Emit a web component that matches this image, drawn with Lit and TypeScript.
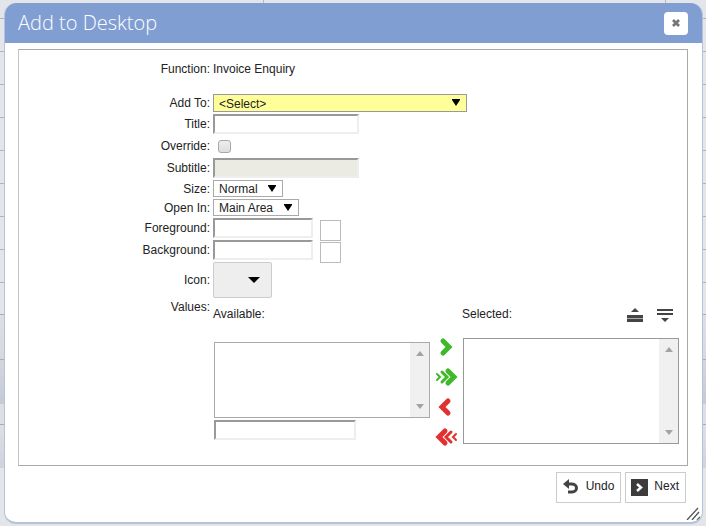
import { LitElement, html, css, svg } from "lit";
import { customElement } from "lit/decorators.js";

const chevron = (x: number, h: number, w: number, dir: number) => svg`
  <path d="M${x} ${10 - h} L${x + dir * h} 10 L${x} ${10 + h}" stroke-width=${w}></path>`;

@customElement("app-root")
export class AppRoot extends LitElement {
  static styles = css`
    :host {
      display: block;
      box-sizing: border-box;
      min-height: 100vh;
      padding: 3px 3px 3px 4px;
      background:
        linear-gradient(#b9bbc3, #b9bbc3) 263px 0 / 1px 3px no-repeat,
        linear-gradient(#b9bbc3, #b9bbc3) 665px 0 / 1px 3px no-repeat,
        linear-gradient(
          #a9acb6 0 1px, #dcdfe6 1px, #d6d9e0 45px, #a9acb6 45px 46px, #d3d6de 46px, #c6cad4 90px,
          #dcdfe6 90px 110px, #a9acb6 110px 111px, #dcdfe6 111px, #d0d3db 154px, #e4e5e9 154px
        ) 0 314px / 100% 100vh no-repeat,
        repeating-linear-gradient(#e3e5ea 0 18px, #b0b3bc 18px 19px, #e3e5ea 19px 33px);
      font: 12px/18px "Liberation Sans", Arial, sans-serif;
      color: #222;
    }
    * { box-sizing: border-box; }
    .dialog {
      display: flex;
      flex-direction: column;
      background: #fff;
      border-radius: 12px;
      border: 1px solid #b4c3da;
      border-top: 0;
      border-bottom-width: 2px;
      min-height: calc(100vh - 5px);
      position: relative;
      overflow: hidden;
    }
    .header {
      display: flex;
      align-items: center;
      justify-content: space-between;
      height: 40px;
      padding: 0 14px 0 13px;
      background: #819ed3;
    }
    .title {
      margin: 0;
      font: 300 20px/40px "Open Sans", "Noto Sans", sans-serif;
      color: #fff;
    }
    button {
      font: inherit;
      color: inherit;
      padding: 0;
      border: 0;
      background: none;
      display: flex;
      align-items: center;
      justify-content: center;
    }
    .close {
      width: 24px;
      height: 23px;
      border-radius: 4px;
      background: #fff;
    }
    .panel {
      flex: 1;
      margin: 6px 14px 0 13px;
      border: 1px solid #aaa;
      border-left-color: #c4c4c4;
      padding: 10px 8px 16px 0;
      display: flex;
      flex-direction: column;
      gap: 2px;
    }
    .row {
      display: grid;
      grid-template-columns: 191px minmax(0, 1fr);
      column-gap: 3px;
      align-items: center;
    }
    .row > :first-child { text-align: right; }
    .function { margin-bottom: 14px; }
    .short { line-height: 16px; }
    .tall { min-height: 20px; }
    input[type="text"] {
      display: block;
      width: 146px;
      height: 20px;
      margin: 0;
      padding: 1px 4px;
      font: inherit;
      border: 2px solid #eee;
      border-top-color: #999;
      border-left-color: #999;
      background: #fff;
    }
    input[type="text"].colour { width: 100px; }
    input[type="text"].filter { width: 142px; }
    input[type="text"]:disabled { background: #ebebe4; }
    input[type="checkbox"] {
      appearance: none;
      display: block;
      width: 13px;
      height: 13px;
      margin: 0 0 0 5px;
      border: 1px solid #a8a8a8;
      border-radius: 3px;
      background: linear-gradient(#eee, #ddd);
    }
    .drop { position: relative; display: block; width: 254px; height: 18px; }
    .drop select {
      appearance: none;
      display: block;
      width: 100%;
      height: 100%;
      margin: 0;
      padding: 0 5px;
      font: inherit;
      color: #222;
      border: 1px solid #aaa;
      border-radius: 0;
      background: #fff;
    }
    .drop.required select { background: #ffff99; border-color: #999; }
    .drop.size { width: 70px; height: 17px; }
    .drop.open { width: 86px; height: 17px; }
    .caret { position: absolute; right: 7px; top: 5px; pointer-events: none; }
    .pair { display: flex; gap: 7px; height: 20px; }
    .swatch {
      width: 21px;
      height: 21px;
      margin-top: 2px;
      border: 1px solid #bbb;
      background: #fff;
    }
    .icon {
      width: 59px;
      height: 36px;
      padding-left: 23px;
      border: 1px solid #ccc;
      border-radius: 2px;
      background: #eee;
    }
    .values { align-items: start; }
    .values > :first-child { line-height: 14px; }
    .picker {
      display: grid;
      grid-template-columns: 217px 33px 216px;
      padding-top: 5px;
    }
    .heads { height: 33px; display: flex; }
    .heads label { flex: 1; }
    .selected .heads { padding-right: 5px; gap: 12px; align-items: flex-start; }
    .selected .heads label { margin-left: -1px; }
    .order { width: 18px; height: 20px; }
    .available { padding-left: 1px; }
    .available .heads { margin: 0 0 4px -1px; }
    .list {
      display: flex;
      height: 106px;
      border: 1px solid #999;
    }
    .available .list { height: 76px; margin-bottom: 2px; border-color: #aaa; }
    .list select {
      appearance: none;
      flex: 1;
      min-width: 0;
      height: 100%;
      border: 0;
      margin: 0;
      padding: 0;
      background: #fff;
      font: inherit;
      overflow: hidden;
    }
    .scroll {
      width: 19px;
      padding: 8px 0;
      background: #f0f0f0;
      display: flex;
      flex-direction: column;
      align-items: center;
      justify-content: space-between;
    }
    .moves {
      display: flex;
      flex-direction: column;
      gap: 10px;
      padding: 32px 0 0 5px;
    }
    .move { width: 24px; height: 20px; }
    .move path { fill: none; stroke: currentColor; stroke-linecap: round; }
    .add { color: #3fb929; }
    .remove { color: #e23030; }
    .footer {
      display: flex;
      justify-content: flex-end;
      gap: 4px;
      padding: 6px 16px 19px;
    }
    .action {
      height: 31px;
      padding: 0 6px 3px 5px;
      gap: 6px;
      border: 1px solid #ccc;
      background: #fff;
    }
    .action svg { margin-top: 2px; }
    .grip { position: absolute; right: 2px; bottom: 2px; }
    svg { display: block; }
  `;

  private caret() {
    return html`<svg class="caret" width="8" height="7" viewBox="0 0 8 7"><path d="M0 0H8V1L4 7L0 1Z" fill="#000"></path></svg>`;
  }

  private scrollbar() {
    return html`<div class="scroll">
      <svg width="8" height="5"><path d="M0 5L4 0L8 5Z" fill="#a3a3a3"></path></svg>
      <svg width="8" height="5"><path d="M0 0H8L4 5Z" fill="#a3a3a3"></path></svg>
    </div>`;
  }

  private colourRow(name: string, id: string) {
    return html`<div class="row">
      <label for=${id}>${name}:</label>
      <div class="pair">
        <input class="colour" type="text" id=${id} />
        <button class="swatch" type="button" aria-label="${name} colour"></button>
      </div>
    </div>`;
  }

  render() {
    return html`
      <section class="dialog" role="dialog" aria-labelledby="heading">
        <header class="header">
          <h1 class="title" id="heading">Add to Desktop</h1>
          <button class="close" aria-label="Close">
            <svg width="8" height="8" viewBox="0 0 8 8"><path d="M1 1L7 7M7 1L1 7" stroke="#777" stroke-width="2.8"></path></svg>
          </button>
        </header>
        <form class="panel" @submit=${(e: Event) => e.preventDefault()}>
          <div class="row function"><span>Function:</span><span>Invoice Enquiry</span></div>
          <div class="row">
            <label for="addto">Add To:</label>
            <span class="drop required"><select id="addto"><option>&lt;Select&gt;</option></select>${this.caret()}</span>
          </div>
          <div class="row"><label for="name">Title:</label><input type="text" id="name" /></div>
          <div class="row tall"><label for="override">Override:</label><input type="checkbox" id="override" /></div>
          <div class="row"><label for="subtitle">Subtitle:</label><input type="text" id="subtitle" disabled /></div>
          <div class="row short">
            <label for="size">Size:</label>
            <span class="drop size"><select id="size"><option>Normal</option></select>${this.caret()}</span>
          </div>
          <div class="row short">
            <label for="openin">Open In:</label>
            <span class="drop open"><select id="openin"><option>Main Area</option></select>${this.caret()}</span>
          </div>
          ${this.colourRow("Foreground", "foreground")}
          ${this.colourRow("Background", "background")}
          <div class="row">
            <label for="icon">Icon:</label>
            <button class="icon" id="icon" type="button">
              <svg width="12" height="6"><path d="M0 0H12L6 6Z" fill="#000"></path></svg>
            </button>
          </div>
          <div class="row values">
            <span>Values:</span>
            <div class="picker">
              <div class="available">
                <div class="heads"><label for="available">Available:</label></div>
                <div class="list"><select id="available" multiple></select>${this.scrollbar()}</div>
                <input class="filter" type="text" aria-label="Filter available values" />
              </div>
              <div class="moves">
                <button class="move add" type="button" aria-label="Add">
                  <svg width="24" height="20">${chevron(8, 6, 5, 1)}</svg>
                </button>
                <button class="move add" type="button" aria-label="Add all">
                  <svg width="24" height="20">${chevron(2, 3, 2, 1)}${chevron(7, 5, 3, 1)}${chevron(13, 6, 5, 1)}</svg>
                </button>
                <button class="move remove" type="button" aria-label="Remove">
                  <svg width="24" height="20">${chevron(13, 6, 5, -1)}</svg>
                </button>
                <button class="move remove" type="button" aria-label="Remove all">
                  <svg width="24" height="20">${chevron(10, 6, 5, -1)}${chevron(16, 5, 3, -1)}${chevron(21, 3, 2, -1)}</svg>
                </button>
              </div>
              <div class="selected">
                <div class="heads">
                  <label for="selected">Selected:</label>
                  <button class="order" type="button" aria-label="Move up">
                    <svg width="16" height="16"><path d="M4 5L8 1L12 5Z M0 8H16V11H0Z M0 12H16V15H0Z" fill="#444"></path><path d="M0 11H16V12H0Z" fill="#aaa"></path></svg>
                  </button>
                  <button class="order" type="button" aria-label="Move down">
                    <svg width="16" height="16"><path d="M0 2H16V4H0Z M0 6H16V8H0Z M4 11H12L8 15Z" fill="#444"></path></svg>
                  </button>
                </div>
                <div class="list"><select id="selected" multiple></select>${this.scrollbar()}</div>
              </div>
            </div>
          </div>
        </form>
        <footer class="footer">
          <button class="action">
            <svg width="18" height="18" viewBox="0 0 18 18"><path d="M4 6H10C16 6 16 14 10 14H6" fill="none" stroke="#444" stroke-width="3"></path><path d="M1 6L7 1V11Z" fill="#444"></path></svg>
            Undo
          </button>
          <button class="action">
            <svg width="17" height="17" viewBox="0 0 17 17"><path d="M0 0H17V17H0Z" fill="#3c3c3c"></path><path d="M6 5L10 8.5L6 12" fill="none" stroke="#fff" stroke-width="2.5"></path></svg>
            Next
          </button>
        </footer>
        <svg class="grip" width="14" height="13" viewBox="0 0 14 13"><path d="M1 13L12 1M6 13L13 5M11 13L14 10" stroke="#555" stroke-width="1.3"></path></svg>
      </section>
    `;
  }
}
